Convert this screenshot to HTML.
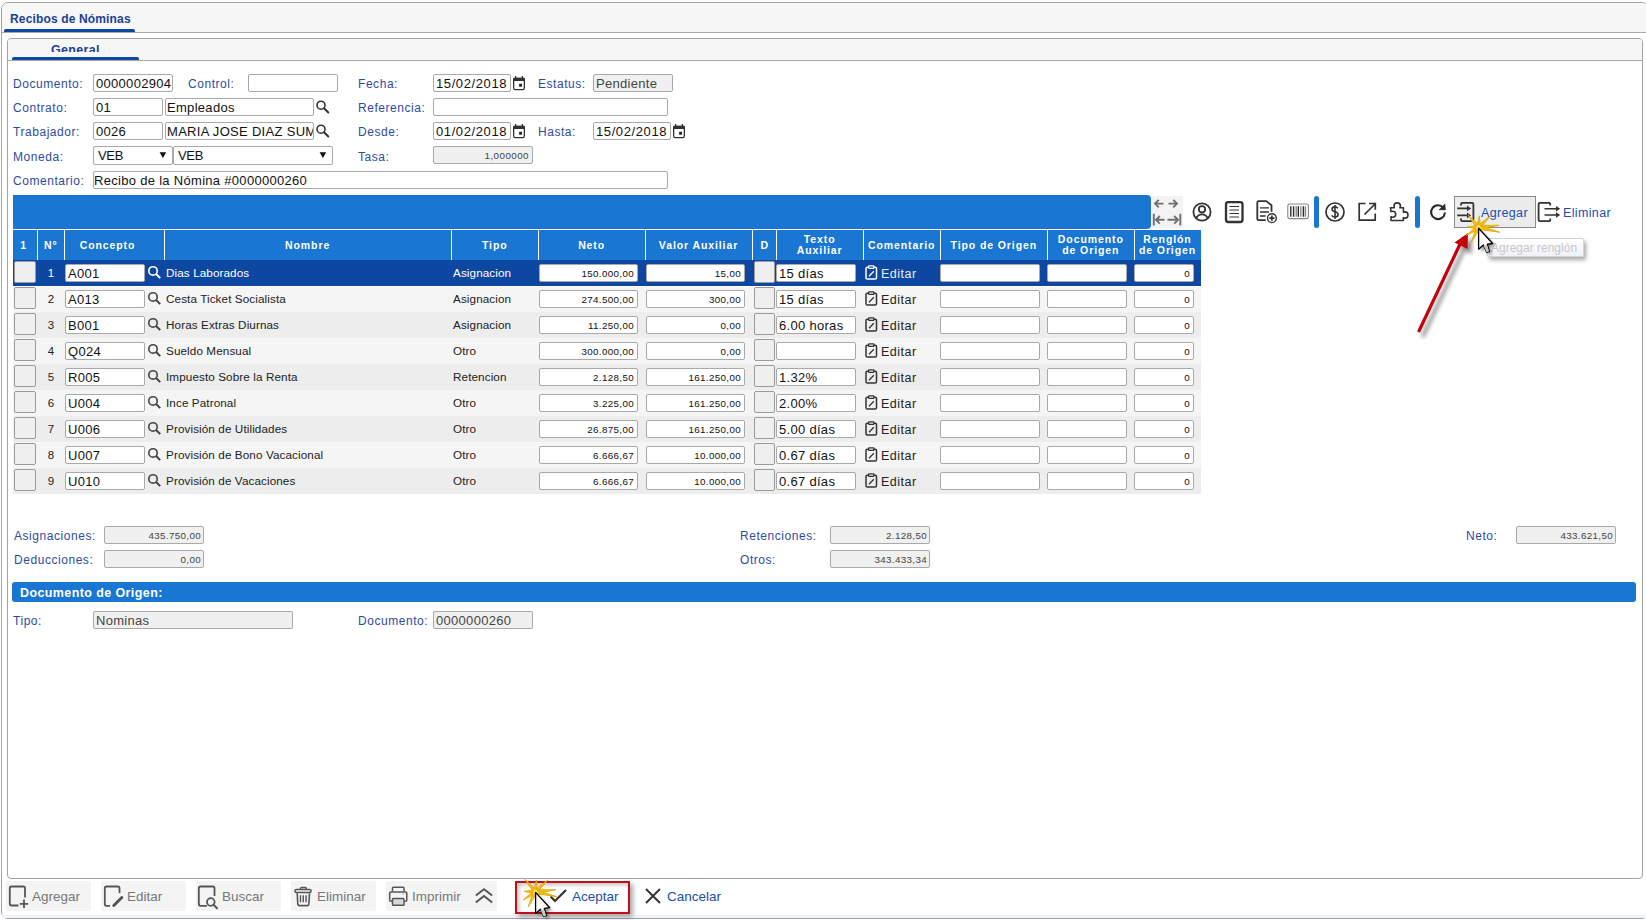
<!DOCTYPE html><html><head><meta charset="utf-8"><style>
html,body{margin:0;padding:0;background:#fff;}
body{width:1646px;height:920px;overflow:hidden;position:relative;font-family:"Liberation Sans",sans-serif;}
.t{position:absolute;white-space:nowrap;}
.hd{font-size:10.5px;font-weight:bold;color:#fff;line-height:11px;letter-spacing:0.9px;}
.lbl{position:absolute;white-space:nowrap;font-size:12px;letter-spacing:0.55px;color:#2f4ba0;line-height:16px;}
.inp{position:absolute;box-sizing:border-box;border:1px solid #a9a9a9;border-radius:2px;background:#fff;font-size:13px;color:#111;padding:0 2px;letter-spacing:0.3px;white-space:nowrap;overflow:hidden;}
.dis{position:absolute;box-sizing:border-box;border:1px solid #a9a9a9;border-radius:2px;background:#f0f0f0;font-size:13px;color:#444;padding:0 2px;letter-spacing:0.3px;white-space:nowrap;overflow:hidden;}
svg{position:absolute;overflow:visible;}
</style></head><body>
<div style="position:absolute;left:1px;top:2px;width:1648px;height:917px;box-sizing:border-box;border:1px solid #a3a3a3;border-radius:7px;background:#fff;"></div>
<div style="position:absolute;left:2px;top:3px;width:1646px;height:29px;background:#f7f7f7;border-radius:6px 6px 0 0;"></div>
<div style="position:absolute;left:2px;top:32px;width:1646px;height:1px;background:#a8a8a8;"></div>
<div style="position:absolute;left:2px;top:915px;width:1646px;height:3px;background:#f0f4f8;border-radius:0 0 6px 6px;"></div>
<div class="t" style="left:10px;top:11px;font-size:12px;font-weight:bold;color:#1c3f95;line-height:16px;letter-spacing:0.15px;">Recibos de Nóminas</div>
<div style="position:absolute;left:4px;top:29px;width:131px;height:3px;background:#0d47a1;border-radius:2px 2px 0 0;"></div>
<div style="position:absolute;left:7px;top:38px;width:1636px;height:841px;box-sizing:border-box;border:1px solid #a3a3a3;border-radius:4px;background:#fff;"></div>
<div style="position:absolute;left:8px;top:39px;width:1634px;height:21px;background:#f7f7f7;border-radius:3px 3px 0 0;"></div>
<div style="position:absolute;left:8px;top:60px;width:1634px;height:1px;background:#a8a8a8;"></div>
<div style="position:absolute;left:8px;top:39px;width:200px;height:13px;overflow:hidden;"><div class="t" style="left:43px;top:3px;font-size:12.5px;font-weight:bold;color:#1c3f95;line-height:16px;letter-spacing:0.3px;">General</div></div>
<div style="position:absolute;left:12px;top:57px;width:127px;height:3px;background:#0d47a1;border-radius:2px 2px 0 0;"></div>
<div class="lbl" style="left:13px;top:76px;">Documento:</div>
<div class="inp" style="left:93px;top:74px;width:80px;height:18px;text-align:left;line-height:17px;letter-spacing:0.3px;">0000002904</div>
<div class="lbl" style="left:188px;top:76px;">Control:</div>
<div class="inp" style="left:248px;top:74px;width:90px;height:18px;text-align:left;line-height:17px;"></div>
<div class="lbl" style="left:358px;top:76px;">Fecha:</div>
<div class="inp" style="left:433px;top:74px;width:78px;height:18px;text-align:left;line-height:17px;letter-spacing:0.6px;">15/02/2018</div>
<div class="lbl" style="left:538px;top:76px;">Estatus:</div>
<div class="dis" style="left:593px;top:74px;width:80px;height:18px;text-align:left;line-height:17px;">Pendiente</div>
<div class="lbl" style="left:13px;top:100px;">Contrato:</div>
<div class="inp" style="left:93px;top:98px;width:70px;height:18px;text-align:left;line-height:17px;">01</div>
<div class="inp" style="left:165px;top:98px;width:149px;height:18px;text-align:left;line-height:17px;padding-left:1px;">Empleados</div>
<div class="lbl" style="left:358px;top:100px;">Referencia:</div>
<div class="inp" style="left:433px;top:98px;width:235px;height:18px;text-align:left;line-height:17px;"></div>
<div class="lbl" style="left:13px;top:124px;">Trabajador:</div>
<div class="inp" style="left:93px;top:122px;width:70px;height:18px;text-align:left;line-height:17px;">0026</div>
<div class="inp" style="left:165px;top:122px;width:149px;height:18px;text-align:left;line-height:17px;padding-left:1px;">MARIA JOSE DIAZ SUMOZA</div>
<div class="lbl" style="left:358px;top:124px;">Desde:</div>
<div class="inp" style="left:433px;top:122px;width:78px;height:18px;text-align:left;line-height:17px;letter-spacing:0.6px;">01/02/2018</div>
<div class="lbl" style="left:538px;top:124px;">Hasta:</div>
<div class="inp" style="left:593px;top:122px;width:78px;height:18px;text-align:left;line-height:17px;letter-spacing:0.6px;">15/02/2018</div>
<div class="lbl" style="left:13px;top:149px;">Moneda:</div>
<div class="inp" style="left:93px;top:146px;width:80px;height:19px;text-align:left;line-height:18px;padding-left:4px;letter-spacing:-0.3px;">VEB</div>
<div class="inp" style="left:173px;top:146px;width:160px;height:19px;text-align:left;line-height:18px;padding-left:4px;letter-spacing:-0.3px;">VEB</div>
<div class="lbl" style="left:358px;top:149px;">Tasa:</div>
<div class="dis" style="left:433px;top:146px;width:100px;height:18px;text-align:right;line-height:17px;font-size:9.8px;letter-spacing:0.45px;padding-right:3px;">1,000000</div>
<div class="lbl" style="left:13px;top:173px;">Comentario:</div>
<div class="inp" style="left:93px;top:171px;width:575px;height:18px;text-align:left;line-height:17px;padding-left:0px;">Recibo de la Nómina #0000000260</div>
<div style="position:absolute;left:13px;top:195px;width:1138px;height:34px;background:#1976d2;border-radius:0 4px 4px 0;"></div>
<div style="position:absolute;left:1152px;top:196px;width:31px;height:32px;background:#f3f3f3;"></div>
<svg style="left:0;top:0" width="1646" height="920" viewBox="0 0 1646 920"><g stroke="#707070" stroke-width="1.9" fill="none" stroke-linecap="butt" stroke-linejoin="miter"><path d="M1163.5 203.6H1155M1158.8 199.8L1155 203.6L1158.8 207.4"/><path d="M1168.5 203.6H1177M1173.2 199.8L1177 203.6L1173.2 207.4"/><path d="M1153.8 213.8V225.6M1164.5 219.8H1156M1159.8 216L1156 219.8L1159.8 223.6"/><path d="M1180.3 213.8V225.6M1167.5 219.8H1178M1174.2 216L1178 219.8L1174.2 223.6"/></g><g stroke="#333" stroke-width="1.8" fill="none"><circle cx="1202" cy="212" r="8.6"/><circle cx="1202" cy="209.3" r="3.2"/><path d="M1196.2 218.3C1197.5 215.3 1199.5 214.3 1202 214.3C1204.5 214.3 1206.5 215.3 1207.8 218.3"/></g><rect x="1226" y="202.2" width="16.5" height="19.8" rx="2.2" stroke="#333" stroke-width="2.3" fill="none"/><path d="M1229.5 206.5H1239M1229.5 210H1239M1229.5 213.5H1239M1229.5 217H1239" stroke="#333" stroke-width="1.2"/><path d="M1265.7 220.2H1258.7C1257.8 220.2 1257.3 219.7 1257.3 218.8V202.5C1257.3 201.6 1257.8 201.1 1258.7 201.1H1266.3L1271.5 205.2V211.8" stroke="#333" stroke-width="1.8" fill="none" stroke-linejoin="round"/><path d="M1259.9 207.9H1269M1259.9 212H1269M1259.9 216H1265.7" stroke="#333" stroke-width="1.3"/><circle cx="1271.9" cy="218.2" r="4.4" stroke="#333" stroke-width="1.4" fill="#fff"/><path d="M1271.9 215.6V220.8M1269.3 218.2H1274.5" stroke="#333" stroke-width="1.7"/><rect x="1287.8" y="204" width="20.6" height="14.6" rx="2.2" stroke="#888" stroke-width="1.1" fill="none"/><g stroke-width="1.4"><path d="M1290.8 206.2V216.8M1293.6 206.2V216.8M1298.3 206.2V216.8M1303.4 206.2V216.8" stroke="#2a2a2a"/><path d="M1296.2 206.2V216.8M1300.8 206.2V216.8M1305.4 206.2V216.8" stroke="#8a8a8a"/></g><circle cx="1335" cy="212" r="9" stroke="#333" stroke-width="1.7" fill="none"/><path d="M1338 208.4C1337.2 207.3 1336.2 206.9 1334.9 206.9C1333.2 206.9 1332 207.8 1332 209.2C1332 210.6 1333.2 211.2 1335 211.7C1336.9 212.2 1338.1 212.9 1338.1 214.5C1338.1 216 1336.8 217 1335 217C1333.5 217 1332.4 216.4 1331.7 215.4M1335 205V219" stroke="#333" stroke-width="1.6" fill="none"/><path d="M1365.5 203.5H1359.2V220.2H1375.2V213.5" stroke="#333" stroke-width="1.7" fill="none"/><path d="M1364.5 214.5L1375 204M1369 203.5H1375.3V209.8" stroke="#333" stroke-width="1.7" fill="none"/><path d="M1390.5 207.8H1394.5C1394.2 207.2 1394 206.6 1394 206C1394 204.1 1395.5 202.9 1397.2 202.9C1398.9 202.9 1400.4 204.1 1400.4 206C1400.4 206.6 1400.2 207.2 1399.9 207.8H1403.4V212.3C1403.9 212 1404.5 211.9 1405 211.9C1406.9 211.9 1408 213.3 1408 215C1408 216.7 1406.9 218.1 1405 218.1C1404.5 218.1 1403.9 218 1403.4 217.7V220.5H1391V216.8C1391.5 217.1 1392.2 217.2 1392.7 217.2C1394.6 217.2 1395.7 215.9 1395.7 214.2C1395.7 212.5 1394.6 211.2 1392.7 211.2C1392.2 211.2 1391.5 211.3 1391 211.6Z" stroke="#333" stroke-width="1.6" fill="none" stroke-linejoin="round"/><path d="M1444.8 213.3A6.9 6.9 0 1 1 1443.3 207.8" stroke="#2a2a2a" stroke-width="2.1" fill="none" stroke-linecap="round"/><path d="M1444.9 203.9L1445.5 209.9L1439 209.8Z" fill="#2a2a2a" stroke="#2a2a2a" stroke-width="0.5" stroke-linejoin="round"/></svg>
<div style="position:absolute;left:1314px;top:196px;width:5px;height:32px;background:#1976d2;border-radius:3px;"></div>
<div style="position:absolute;left:1415px;top:196px;width:5px;height:32px;background:#1976d2;border-radius:3px;"></div>
<div style="position:absolute;left:1454px;top:196px;width:82px;height:32px;box-sizing:border-box;border:1px solid #8a8a8a;background:#ececec;"></div>
<svg style="left:0;top:0" width="1646" height="920" viewBox="0 0 1646 920"><path d="M1461 205.5V204.3C1461 203.5 1461.5 202.9 1462.3 202.9H1472.1C1472.9 202.9 1473.4 203.5 1473.4 204.3V219.8C1473.4 220.6 1472.9 221.1 1472.1 221.1H1462.3C1461.5 221.1 1461 220.6 1461 219.8V218.4" stroke="#333" stroke-width="1.8" fill="none"/><path d="M1457.2 208.4H1468M1457.2 215.4H1468" stroke="#333" stroke-width="1.6"/><path d="M1467 205.6L1471.2 208.4L1467 211.2ZM1467 212.6L1471.2 215.4L1467 218.2Z" fill="#333"/><path d="M1550.2 202.9H1539.8C1539 202.9 1538.6 203.3 1538.6 204.1V220C1538.6 220.8 1539 221.2 1539.8 221.2H1550.2" stroke="#333" stroke-width="1.8" fill="none"/><path d="M1550.2 202.9V205.6M1550.2 221.2V218.6" stroke="#333" stroke-width="1.8"/><path d="M1544.5 208.7H1557.5M1544.5 215H1557.5" stroke="#333" stroke-width="1.6"/><path d="M1556 205.9L1560.2 208.7L1556 211.5ZM1556 212.2L1560.2 215L1556 217.8Z" fill="#333"/></svg>
<div class="t" style="left:1481px;top:205px;font-size:12.5px;letter-spacing:0.35px;color:#1a4db0;line-height:16px;">Agregar</div>
<div class="t" style="left:1563px;top:205px;font-size:12.5px;letter-spacing:0.35px;color:#1a4db0;line-height:16px;">Eliminar</div>
<div style="position:absolute;left:13px;top:230px;width:1188px;height:30px;background:#1976d2;"></div>
<div style="position:absolute;left:37px;top:230px;width:1px;height:30px;background:#fff;"></div>
<div style="position:absolute;left:64px;top:230px;width:1px;height:30px;background:#fff;"></div>
<div style="position:absolute;left:164px;top:230px;width:1px;height:30px;background:#fff;"></div>
<div style="position:absolute;left:451px;top:230px;width:1px;height:30px;background:#fff;"></div>
<div style="position:absolute;left:538px;top:230px;width:1px;height:30px;background:#fff;"></div>
<div style="position:absolute;left:645px;top:230px;width:1px;height:30px;background:#fff;"></div>
<div style="position:absolute;left:752px;top:230px;width:1px;height:30px;background:#fff;"></div>
<div style="position:absolute;left:776px;top:230px;width:1px;height:30px;background:#fff;"></div>
<div style="position:absolute;left:863px;top:230px;width:1px;height:30px;background:#fff;"></div>
<div style="position:absolute;left:940px;top:230px;width:1px;height:30px;background:#fff;"></div>
<div style="position:absolute;left:1047px;top:230px;width:1px;height:30px;background:#fff;"></div>
<div style="position:absolute;left:1134px;top:230px;width:1px;height:30px;background:#fff;"></div>
<div class="t hd" style="left:-36.3px;top:240px;width:120px;text-align:center;">1</div>
<div class="t hd" style="left:-9.2px;top:240px;width:120px;text-align:center;">N°</div>
<div class="t hd" style="left:47.5px;top:240px;width:120px;text-align:center;">Concepto</div>
<div class="t hd" style="left:247.6px;top:240px;width:120px;text-align:center;">Nombre</div>
<div class="t hd" style="left:434.8px;top:240px;width:120px;text-align:center;">Tipo</div>
<div class="t hd" style="left:531.6px;top:240px;width:120px;text-align:center;">Neto</div>
<div class="t hd" style="left:638.5px;top:240px;width:120px;text-align:center;">Valor Auxiliar</div>
<div class="t hd" style="left:704.7px;top:240px;width:120px;text-align:center;">D</div>
<div class="t hd" style="left:759.7px;top:234px;width:120px;text-align:center;">Texto<br>Auxiliar</div>
<div class="t hd" style="left:841.6px;top:240px;width:120px;text-align:center;">Comentario</div>
<div class="t hd" style="left:933.8px;top:240px;width:120px;text-align:center;">Tipo de Origen</div>
<div class="t hd" style="left:1030.8px;top:234px;width:120px;text-align:center;">Documento<br>de Origen</div>
<div class="t hd" style="left:1107.5px;top:234px;width:120px;text-align:center;">Renglón<br>de Origen</div>
<div style="position:absolute;left:13px;top:260px;width:1188px;height:26px;background:#0d47a1;"></div>
<div style="position:absolute;left:14px;top:261px;width:22px;height:22px;box-sizing:border-box;border:1px solid #9a9a9a;border-radius:2px;background:#efefef;"></div>
<div class="t" style="left:38px;top:266px;width:26px;text-align:center;font-size:11.5px;color:#fff;line-height:14px;">1</div>
<div class="inp" style="left:65px;top:264px;width:80px;height:18px;text-align:left;line-height:17px;font-size:13px;line-height:18px;">A001</div>
<svg style="left:148px;top:265px" width="14" height="14" viewBox="0 0 14 14"><circle cx="5.0" cy="5.9" r="4.2" stroke="#fff" stroke-width="1.6" fill="none"/><path d="M8.1 9L12.2 13.1" stroke="#fff" stroke-width="2" stroke-linecap="butt"/></svg>
<div class="t" style="left:166px;top:266px;font-size:11.7px;letter-spacing:0.1px;color:#fff;line-height:14px;">Dias Laborados</div>
<div class="t" style="left:453px;top:266px;font-size:11.7px;letter-spacing:0.1px;color:#fff;line-height:14px;">Asignacion</div>
<div class="inp" style="left:539px;top:264px;width:99px;height:18px;text-align:right;line-height:17px;font-size:9.8px;letter-spacing:0.35px;padding-right:3px;">150.000,00</div>
<div class="inp" style="left:646px;top:264px;width:99px;height:18px;text-align:right;line-height:17px;font-size:9.8px;letter-spacing:0.35px;padding-right:3px;">15,00</div>
<div style="position:absolute;left:754px;top:261px;width:21px;height:22px;box-sizing:border-box;border:1px solid #9a9a9a;border-radius:2px;background:#efefef;"></div>
<div class="inp" style="left:776px;top:264px;width:80px;height:18px;text-align:left;line-height:17px;font-size:13px;line-height:18px;">15 días</div>
<svg style="left:865px;top:265px" width="13" height="15" viewBox="0 0 13 15"><rect x="1" y="2.3" width="10.5" height="11.7" rx="1.3" stroke="#fff" stroke-width="1.5" fill="none"/><rect x="3.6" y="0.8" width="5.3" height="2.6" rx="0.6" stroke="#fff" stroke-width="1.3" fill="#0d47a1"/><path d="M4 11.3L8.8 6.2" stroke="#fff" stroke-width="1.3"/></svg>
<div class="t" style="left:881px;top:266px;font-size:12.5px;letter-spacing:0.5px;color:#e8eefc;line-height:16px;">Editar</div>
<div class="inp" style="left:940px;top:264px;width:100px;height:18px;text-align:left;line-height:17px;"></div>
<div class="inp" style="left:1047px;top:264px;width:80px;height:18px;text-align:left;line-height:17px;"></div>
<div class="inp" style="left:1134px;top:264px;width:60px;height:18px;text-align:right;line-height:17px;font-size:9.8px;letter-spacing:0.35px;padding-right:3px;">0</div>
<div style="position:absolute;left:13px;top:286px;width:1188px;height:26px;background:#f5f5f5;"></div>
<div style="position:absolute;left:13px;top:286px;width:1188px;height:1px;background:#fcfcfc;"></div>
<div style="position:absolute;left:14px;top:287px;width:22px;height:22px;box-sizing:border-box;border:1px solid #9a9a9a;border-radius:2px;background:#efefef;"></div>
<div class="t" style="left:38px;top:292px;width:26px;text-align:center;font-size:11.5px;color:#222;line-height:14px;">2</div>
<div class="inp" style="left:65px;top:290px;width:80px;height:18px;text-align:left;line-height:17px;font-size:13px;line-height:18px;">A013</div>
<svg style="left:148px;top:291px" width="14" height="14" viewBox="0 0 14 14"><circle cx="5.0" cy="5.9" r="4.2" stroke="#444" stroke-width="1.6" fill="none"/><path d="M8.1 9L12.2 13.1" stroke="#444" stroke-width="2" stroke-linecap="butt"/></svg>
<div class="t" style="left:166px;top:292px;font-size:11.7px;letter-spacing:0.1px;color:#222;line-height:14px;">Cesta Ticket Socialista</div>
<div class="t" style="left:453px;top:292px;font-size:11.7px;letter-spacing:0.1px;color:#222;line-height:14px;">Asignacion</div>
<div class="inp" style="left:539px;top:290px;width:99px;height:18px;text-align:right;line-height:17px;font-size:9.8px;letter-spacing:0.35px;padding-right:3px;">274.500,00</div>
<div class="inp" style="left:646px;top:290px;width:99px;height:18px;text-align:right;line-height:17px;font-size:9.8px;letter-spacing:0.35px;padding-right:3px;">300,00</div>
<div style="position:absolute;left:754px;top:287px;width:21px;height:22px;box-sizing:border-box;border:1px solid #9a9a9a;border-radius:2px;background:#efefef;"></div>
<div class="inp" style="left:776px;top:290px;width:80px;height:18px;text-align:left;line-height:17px;font-size:13px;line-height:18px;">15 días</div>
<svg style="left:865px;top:291px" width="13" height="15" viewBox="0 0 13 15"><rect x="1" y="2.3" width="10.5" height="11.7" rx="1.3" stroke="#333" stroke-width="1.5" fill="none"/><rect x="3.6" y="0.8" width="5.3" height="2.6" rx="0.6" stroke="#333" stroke-width="1.3" fill="#f5f5f5"/><path d="M4 11.3L8.8 6.2" stroke="#333" stroke-width="1.3"/></svg>
<div class="t" style="left:881px;top:292px;font-size:12.5px;letter-spacing:0.5px;color:#222;line-height:16px;">Editar</div>
<div class="inp" style="left:940px;top:290px;width:100px;height:18px;text-align:left;line-height:17px;"></div>
<div class="inp" style="left:1047px;top:290px;width:80px;height:18px;text-align:left;line-height:17px;"></div>
<div class="inp" style="left:1134px;top:290px;width:60px;height:18px;text-align:right;line-height:17px;font-size:9.8px;letter-spacing:0.35px;padding-right:3px;">0</div>
<div style="position:absolute;left:13px;top:312px;width:1188px;height:26px;background:#ededed;"></div>
<div style="position:absolute;left:14px;top:313px;width:22px;height:22px;box-sizing:border-box;border:1px solid #9a9a9a;border-radius:2px;background:#efefef;"></div>
<div class="t" style="left:38px;top:318px;width:26px;text-align:center;font-size:11.5px;color:#222;line-height:14px;">3</div>
<div class="inp" style="left:65px;top:316px;width:80px;height:18px;text-align:left;line-height:17px;font-size:13px;line-height:18px;">B001</div>
<svg style="left:148px;top:317px" width="14" height="14" viewBox="0 0 14 14"><circle cx="5.0" cy="5.9" r="4.2" stroke="#444" stroke-width="1.6" fill="none"/><path d="M8.1 9L12.2 13.1" stroke="#444" stroke-width="2" stroke-linecap="butt"/></svg>
<div class="t" style="left:166px;top:318px;font-size:11.7px;letter-spacing:0.1px;color:#222;line-height:14px;">Horas Extras Diurnas</div>
<div class="t" style="left:453px;top:318px;font-size:11.7px;letter-spacing:0.1px;color:#222;line-height:14px;">Asignacion</div>
<div class="inp" style="left:539px;top:316px;width:99px;height:18px;text-align:right;line-height:17px;font-size:9.8px;letter-spacing:0.35px;padding-right:3px;">11.250,00</div>
<div class="inp" style="left:646px;top:316px;width:99px;height:18px;text-align:right;line-height:17px;font-size:9.8px;letter-spacing:0.35px;padding-right:3px;">0,00</div>
<div style="position:absolute;left:754px;top:313px;width:21px;height:22px;box-sizing:border-box;border:1px solid #9a9a9a;border-radius:2px;background:#efefef;"></div>
<div class="inp" style="left:776px;top:316px;width:80px;height:18px;text-align:left;line-height:17px;font-size:13px;line-height:18px;">6.00 horas</div>
<svg style="left:865px;top:317px" width="13" height="15" viewBox="0 0 13 15"><rect x="1" y="2.3" width="10.5" height="11.7" rx="1.3" stroke="#333" stroke-width="1.5" fill="none"/><rect x="3.6" y="0.8" width="5.3" height="2.6" rx="0.6" stroke="#333" stroke-width="1.3" fill="#ededed"/><path d="M4 11.3L8.8 6.2" stroke="#333" stroke-width="1.3"/></svg>
<div class="t" style="left:881px;top:318px;font-size:12.5px;letter-spacing:0.5px;color:#222;line-height:16px;">Editar</div>
<div class="inp" style="left:940px;top:316px;width:100px;height:18px;text-align:left;line-height:17px;"></div>
<div class="inp" style="left:1047px;top:316px;width:80px;height:18px;text-align:left;line-height:17px;"></div>
<div class="inp" style="left:1134px;top:316px;width:60px;height:18px;text-align:right;line-height:17px;font-size:9.8px;letter-spacing:0.35px;padding-right:3px;">0</div>
<div style="position:absolute;left:13px;top:338px;width:1188px;height:26px;background:#f5f5f5;"></div>
<div style="position:absolute;left:14px;top:339px;width:22px;height:22px;box-sizing:border-box;border:1px solid #9a9a9a;border-radius:2px;background:#efefef;"></div>
<div class="t" style="left:38px;top:344px;width:26px;text-align:center;font-size:11.5px;color:#222;line-height:14px;">4</div>
<div class="inp" style="left:65px;top:342px;width:80px;height:18px;text-align:left;line-height:17px;font-size:13px;line-height:18px;">Q024</div>
<svg style="left:148px;top:343px" width="14" height="14" viewBox="0 0 14 14"><circle cx="5.0" cy="5.9" r="4.2" stroke="#444" stroke-width="1.6" fill="none"/><path d="M8.1 9L12.2 13.1" stroke="#444" stroke-width="2" stroke-linecap="butt"/></svg>
<div class="t" style="left:166px;top:344px;font-size:11.7px;letter-spacing:0.1px;color:#222;line-height:14px;">Sueldo Mensual</div>
<div class="t" style="left:453px;top:344px;font-size:11.7px;letter-spacing:0.1px;color:#222;line-height:14px;">Otro</div>
<div class="inp" style="left:539px;top:342px;width:99px;height:18px;text-align:right;line-height:17px;font-size:9.8px;letter-spacing:0.35px;padding-right:3px;">300.000,00</div>
<div class="inp" style="left:646px;top:342px;width:99px;height:18px;text-align:right;line-height:17px;font-size:9.8px;letter-spacing:0.35px;padding-right:3px;">0,00</div>
<div style="position:absolute;left:754px;top:339px;width:21px;height:22px;box-sizing:border-box;border:1px solid #9a9a9a;border-radius:2px;background:#efefef;"></div>
<div class="inp" style="left:776px;top:342px;width:80px;height:18px;text-align:left;line-height:17px;font-size:13px;line-height:18px;"></div>
<svg style="left:865px;top:343px" width="13" height="15" viewBox="0 0 13 15"><rect x="1" y="2.3" width="10.5" height="11.7" rx="1.3" stroke="#333" stroke-width="1.5" fill="none"/><rect x="3.6" y="0.8" width="5.3" height="2.6" rx="0.6" stroke="#333" stroke-width="1.3" fill="#f5f5f5"/><path d="M4 11.3L8.8 6.2" stroke="#333" stroke-width="1.3"/></svg>
<div class="t" style="left:881px;top:344px;font-size:12.5px;letter-spacing:0.5px;color:#222;line-height:16px;">Editar</div>
<div class="inp" style="left:940px;top:342px;width:100px;height:18px;text-align:left;line-height:17px;"></div>
<div class="inp" style="left:1047px;top:342px;width:80px;height:18px;text-align:left;line-height:17px;"></div>
<div class="inp" style="left:1134px;top:342px;width:60px;height:18px;text-align:right;line-height:17px;font-size:9.8px;letter-spacing:0.35px;padding-right:3px;">0</div>
<div style="position:absolute;left:13px;top:364px;width:1188px;height:26px;background:#ededed;"></div>
<div style="position:absolute;left:14px;top:365px;width:22px;height:22px;box-sizing:border-box;border:1px solid #9a9a9a;border-radius:2px;background:#efefef;"></div>
<div class="t" style="left:38px;top:370px;width:26px;text-align:center;font-size:11.5px;color:#222;line-height:14px;">5</div>
<div class="inp" style="left:65px;top:368px;width:80px;height:18px;text-align:left;line-height:17px;font-size:13px;line-height:18px;">R005</div>
<svg style="left:148px;top:369px" width="14" height="14" viewBox="0 0 14 14"><circle cx="5.0" cy="5.9" r="4.2" stroke="#444" stroke-width="1.6" fill="none"/><path d="M8.1 9L12.2 13.1" stroke="#444" stroke-width="2" stroke-linecap="butt"/></svg>
<div class="t" style="left:166px;top:370px;font-size:11.7px;letter-spacing:0.1px;color:#222;line-height:14px;">Impuesto Sobre la Renta</div>
<div class="t" style="left:453px;top:370px;font-size:11.7px;letter-spacing:0.1px;color:#222;line-height:14px;">Retencion</div>
<div class="inp" style="left:539px;top:368px;width:99px;height:18px;text-align:right;line-height:17px;font-size:9.8px;letter-spacing:0.35px;padding-right:3px;">2.128,50</div>
<div class="inp" style="left:646px;top:368px;width:99px;height:18px;text-align:right;line-height:17px;font-size:9.8px;letter-spacing:0.35px;padding-right:3px;">161.250,00</div>
<div style="position:absolute;left:754px;top:365px;width:21px;height:22px;box-sizing:border-box;border:1px solid #9a9a9a;border-radius:2px;background:#efefef;"></div>
<div class="inp" style="left:776px;top:368px;width:80px;height:18px;text-align:left;line-height:17px;font-size:13px;line-height:18px;">1.32%</div>
<svg style="left:865px;top:369px" width="13" height="15" viewBox="0 0 13 15"><rect x="1" y="2.3" width="10.5" height="11.7" rx="1.3" stroke="#333" stroke-width="1.5" fill="none"/><rect x="3.6" y="0.8" width="5.3" height="2.6" rx="0.6" stroke="#333" stroke-width="1.3" fill="#ededed"/><path d="M4 11.3L8.8 6.2" stroke="#333" stroke-width="1.3"/></svg>
<div class="t" style="left:881px;top:370px;font-size:12.5px;letter-spacing:0.5px;color:#222;line-height:16px;">Editar</div>
<div class="inp" style="left:940px;top:368px;width:100px;height:18px;text-align:left;line-height:17px;"></div>
<div class="inp" style="left:1047px;top:368px;width:80px;height:18px;text-align:left;line-height:17px;"></div>
<div class="inp" style="left:1134px;top:368px;width:60px;height:18px;text-align:right;line-height:17px;font-size:9.8px;letter-spacing:0.35px;padding-right:3px;">0</div>
<div style="position:absolute;left:13px;top:390px;width:1188px;height:26px;background:#f5f5f5;"></div>
<div style="position:absolute;left:14px;top:391px;width:22px;height:22px;box-sizing:border-box;border:1px solid #9a9a9a;border-radius:2px;background:#efefef;"></div>
<div class="t" style="left:38px;top:396px;width:26px;text-align:center;font-size:11.5px;color:#222;line-height:14px;">6</div>
<div class="inp" style="left:65px;top:394px;width:80px;height:18px;text-align:left;line-height:17px;font-size:13px;line-height:18px;">U004</div>
<svg style="left:148px;top:395px" width="14" height="14" viewBox="0 0 14 14"><circle cx="5.0" cy="5.9" r="4.2" stroke="#444" stroke-width="1.6" fill="none"/><path d="M8.1 9L12.2 13.1" stroke="#444" stroke-width="2" stroke-linecap="butt"/></svg>
<div class="t" style="left:166px;top:396px;font-size:11.7px;letter-spacing:0.1px;color:#222;line-height:14px;">Ince Patronal</div>
<div class="t" style="left:453px;top:396px;font-size:11.7px;letter-spacing:0.1px;color:#222;line-height:14px;">Otro</div>
<div class="inp" style="left:539px;top:394px;width:99px;height:18px;text-align:right;line-height:17px;font-size:9.8px;letter-spacing:0.35px;padding-right:3px;">3.225,00</div>
<div class="inp" style="left:646px;top:394px;width:99px;height:18px;text-align:right;line-height:17px;font-size:9.8px;letter-spacing:0.35px;padding-right:3px;">161.250,00</div>
<div style="position:absolute;left:754px;top:391px;width:21px;height:22px;box-sizing:border-box;border:1px solid #9a9a9a;border-radius:2px;background:#efefef;"></div>
<div class="inp" style="left:776px;top:394px;width:80px;height:18px;text-align:left;line-height:17px;font-size:13px;line-height:18px;">2.00%</div>
<svg style="left:865px;top:395px" width="13" height="15" viewBox="0 0 13 15"><rect x="1" y="2.3" width="10.5" height="11.7" rx="1.3" stroke="#333" stroke-width="1.5" fill="none"/><rect x="3.6" y="0.8" width="5.3" height="2.6" rx="0.6" stroke="#333" stroke-width="1.3" fill="#f5f5f5"/><path d="M4 11.3L8.8 6.2" stroke="#333" stroke-width="1.3"/></svg>
<div class="t" style="left:881px;top:396px;font-size:12.5px;letter-spacing:0.5px;color:#222;line-height:16px;">Editar</div>
<div class="inp" style="left:940px;top:394px;width:100px;height:18px;text-align:left;line-height:17px;"></div>
<div class="inp" style="left:1047px;top:394px;width:80px;height:18px;text-align:left;line-height:17px;"></div>
<div class="inp" style="left:1134px;top:394px;width:60px;height:18px;text-align:right;line-height:17px;font-size:9.8px;letter-spacing:0.35px;padding-right:3px;">0</div>
<div style="position:absolute;left:13px;top:416px;width:1188px;height:26px;background:#ededed;"></div>
<div style="position:absolute;left:14px;top:417px;width:22px;height:22px;box-sizing:border-box;border:1px solid #9a9a9a;border-radius:2px;background:#efefef;"></div>
<div class="t" style="left:38px;top:422px;width:26px;text-align:center;font-size:11.5px;color:#222;line-height:14px;">7</div>
<div class="inp" style="left:65px;top:420px;width:80px;height:18px;text-align:left;line-height:17px;font-size:13px;line-height:18px;">U006</div>
<svg style="left:148px;top:421px" width="14" height="14" viewBox="0 0 14 14"><circle cx="5.0" cy="5.9" r="4.2" stroke="#444" stroke-width="1.6" fill="none"/><path d="M8.1 9L12.2 13.1" stroke="#444" stroke-width="2" stroke-linecap="butt"/></svg>
<div class="t" style="left:166px;top:422px;font-size:11.7px;letter-spacing:0.1px;color:#222;line-height:14px;">Provisión de Utilidades</div>
<div class="t" style="left:453px;top:422px;font-size:11.7px;letter-spacing:0.1px;color:#222;line-height:14px;">Otro</div>
<div class="inp" style="left:539px;top:420px;width:99px;height:18px;text-align:right;line-height:17px;font-size:9.8px;letter-spacing:0.35px;padding-right:3px;">26.875,00</div>
<div class="inp" style="left:646px;top:420px;width:99px;height:18px;text-align:right;line-height:17px;font-size:9.8px;letter-spacing:0.35px;padding-right:3px;">161.250,00</div>
<div style="position:absolute;left:754px;top:417px;width:21px;height:22px;box-sizing:border-box;border:1px solid #9a9a9a;border-radius:2px;background:#efefef;"></div>
<div class="inp" style="left:776px;top:420px;width:80px;height:18px;text-align:left;line-height:17px;font-size:13px;line-height:18px;">5.00 días</div>
<svg style="left:865px;top:421px" width="13" height="15" viewBox="0 0 13 15"><rect x="1" y="2.3" width="10.5" height="11.7" rx="1.3" stroke="#333" stroke-width="1.5" fill="none"/><rect x="3.6" y="0.8" width="5.3" height="2.6" rx="0.6" stroke="#333" stroke-width="1.3" fill="#ededed"/><path d="M4 11.3L8.8 6.2" stroke="#333" stroke-width="1.3"/></svg>
<div class="t" style="left:881px;top:422px;font-size:12.5px;letter-spacing:0.5px;color:#222;line-height:16px;">Editar</div>
<div class="inp" style="left:940px;top:420px;width:100px;height:18px;text-align:left;line-height:17px;"></div>
<div class="inp" style="left:1047px;top:420px;width:80px;height:18px;text-align:left;line-height:17px;"></div>
<div class="inp" style="left:1134px;top:420px;width:60px;height:18px;text-align:right;line-height:17px;font-size:9.8px;letter-spacing:0.35px;padding-right:3px;">0</div>
<div style="position:absolute;left:13px;top:442px;width:1188px;height:26px;background:#f5f5f5;"></div>
<div style="position:absolute;left:14px;top:443px;width:22px;height:22px;box-sizing:border-box;border:1px solid #9a9a9a;border-radius:2px;background:#efefef;"></div>
<div class="t" style="left:38px;top:448px;width:26px;text-align:center;font-size:11.5px;color:#222;line-height:14px;">8</div>
<div class="inp" style="left:65px;top:446px;width:80px;height:18px;text-align:left;line-height:17px;font-size:13px;line-height:18px;">U007</div>
<svg style="left:148px;top:447px" width="14" height="14" viewBox="0 0 14 14"><circle cx="5.0" cy="5.9" r="4.2" stroke="#444" stroke-width="1.6" fill="none"/><path d="M8.1 9L12.2 13.1" stroke="#444" stroke-width="2" stroke-linecap="butt"/></svg>
<div class="t" style="left:166px;top:448px;font-size:11.7px;letter-spacing:0.1px;color:#222;line-height:14px;">Provisión de Bono Vacacional</div>
<div class="t" style="left:453px;top:448px;font-size:11.7px;letter-spacing:0.1px;color:#222;line-height:14px;">Otro</div>
<div class="inp" style="left:539px;top:446px;width:99px;height:18px;text-align:right;line-height:17px;font-size:9.8px;letter-spacing:0.35px;padding-right:3px;">6.666,67</div>
<div class="inp" style="left:646px;top:446px;width:99px;height:18px;text-align:right;line-height:17px;font-size:9.8px;letter-spacing:0.35px;padding-right:3px;">10.000,00</div>
<div style="position:absolute;left:754px;top:443px;width:21px;height:22px;box-sizing:border-box;border:1px solid #9a9a9a;border-radius:2px;background:#efefef;"></div>
<div class="inp" style="left:776px;top:446px;width:80px;height:18px;text-align:left;line-height:17px;font-size:13px;line-height:18px;">0.67 días</div>
<svg style="left:865px;top:447px" width="13" height="15" viewBox="0 0 13 15"><rect x="1" y="2.3" width="10.5" height="11.7" rx="1.3" stroke="#333" stroke-width="1.5" fill="none"/><rect x="3.6" y="0.8" width="5.3" height="2.6" rx="0.6" stroke="#333" stroke-width="1.3" fill="#f5f5f5"/><path d="M4 11.3L8.8 6.2" stroke="#333" stroke-width="1.3"/></svg>
<div class="t" style="left:881px;top:448px;font-size:12.5px;letter-spacing:0.5px;color:#222;line-height:16px;">Editar</div>
<div class="inp" style="left:940px;top:446px;width:100px;height:18px;text-align:left;line-height:17px;"></div>
<div class="inp" style="left:1047px;top:446px;width:80px;height:18px;text-align:left;line-height:17px;"></div>
<div class="inp" style="left:1134px;top:446px;width:60px;height:18px;text-align:right;line-height:17px;font-size:9.8px;letter-spacing:0.35px;padding-right:3px;">0</div>
<div style="position:absolute;left:13px;top:468px;width:1188px;height:26px;background:#ededed;"></div>
<div style="position:absolute;left:14px;top:469px;width:22px;height:22px;box-sizing:border-box;border:1px solid #9a9a9a;border-radius:2px;background:#efefef;"></div>
<div class="t" style="left:38px;top:474px;width:26px;text-align:center;font-size:11.5px;color:#222;line-height:14px;">9</div>
<div class="inp" style="left:65px;top:472px;width:80px;height:18px;text-align:left;line-height:17px;font-size:13px;line-height:18px;">U010</div>
<svg style="left:148px;top:473px" width="14" height="14" viewBox="0 0 14 14"><circle cx="5.0" cy="5.9" r="4.2" stroke="#444" stroke-width="1.6" fill="none"/><path d="M8.1 9L12.2 13.1" stroke="#444" stroke-width="2" stroke-linecap="butt"/></svg>
<div class="t" style="left:166px;top:474px;font-size:11.7px;letter-spacing:0.1px;color:#222;line-height:14px;">Provisión de Vacaciones</div>
<div class="t" style="left:453px;top:474px;font-size:11.7px;letter-spacing:0.1px;color:#222;line-height:14px;">Otro</div>
<div class="inp" style="left:539px;top:472px;width:99px;height:18px;text-align:right;line-height:17px;font-size:9.8px;letter-spacing:0.35px;padding-right:3px;">6.666,67</div>
<div class="inp" style="left:646px;top:472px;width:99px;height:18px;text-align:right;line-height:17px;font-size:9.8px;letter-spacing:0.35px;padding-right:3px;">10.000,00</div>
<div style="position:absolute;left:754px;top:469px;width:21px;height:22px;box-sizing:border-box;border:1px solid #9a9a9a;border-radius:2px;background:#efefef;"></div>
<div class="inp" style="left:776px;top:472px;width:80px;height:18px;text-align:left;line-height:17px;font-size:13px;line-height:18px;">0.67 días</div>
<svg style="left:865px;top:473px" width="13" height="15" viewBox="0 0 13 15"><rect x="1" y="2.3" width="10.5" height="11.7" rx="1.3" stroke="#333" stroke-width="1.5" fill="none"/><rect x="3.6" y="0.8" width="5.3" height="2.6" rx="0.6" stroke="#333" stroke-width="1.3" fill="#ededed"/><path d="M4 11.3L8.8 6.2" stroke="#333" stroke-width="1.3"/></svg>
<div class="t" style="left:881px;top:474px;font-size:12.5px;letter-spacing:0.5px;color:#222;line-height:16px;">Editar</div>
<div class="inp" style="left:940px;top:472px;width:100px;height:18px;text-align:left;line-height:17px;"></div>
<div class="inp" style="left:1047px;top:472px;width:80px;height:18px;text-align:left;line-height:17px;"></div>
<div class="inp" style="left:1134px;top:472px;width:60px;height:18px;text-align:right;line-height:17px;font-size:9.8px;letter-spacing:0.35px;padding-right:3px;">0</div>
<div class="lbl" style="left:14px;top:528px;">Asignaciones:</div>
<div class="dis" style="left:104px;top:526px;width:100px;height:18px;text-align:right;line-height:17px;font-size:9.8px;letter-spacing:0.35px;padding-right:2px;line-height:17px;">435.750,00</div>
<div class="lbl" style="left:14px;top:552px;">Deducciones:</div>
<div class="dis" style="left:104px;top:550px;width:100px;height:18px;text-align:right;line-height:17px;font-size:9.8px;letter-spacing:0.35px;padding-right:2px;line-height:17px;">0,00</div>
<div class="lbl" style="left:740px;top:528px;">Retenciones:</div>
<div class="dis" style="left:830px;top:526px;width:100px;height:18px;text-align:right;line-height:17px;font-size:9.8px;letter-spacing:0.35px;padding-right:2px;line-height:17px;">2.128,50</div>
<div class="lbl" style="left:740px;top:552px;">Otros:</div>
<div class="dis" style="left:830px;top:550px;width:100px;height:18px;text-align:right;line-height:17px;font-size:9.8px;letter-spacing:0.35px;padding-right:2px;line-height:17px;">343.433,34</div>
<div class="lbl" style="left:1466px;top:528px;">Neto:</div>
<div class="dis" style="left:1516px;top:526px;width:100px;height:18px;text-align:right;line-height:17px;font-size:9.8px;letter-spacing:0.35px;padding-right:2px;line-height:17px;">433.621,50</div>
<div style="position:absolute;left:12px;top:582px;width:1624px;height:20px;background:#1976d2;border-radius:3px;"></div>
<div class="t" style="left:20px;top:586px;font-size:12.5px;font-weight:bold;color:#fff;line-height:15px;letter-spacing:0.4px;">Documento de Origen:</div>
<div class="lbl" style="left:13px;top:613px;">Tipo:</div>
<div class="dis" style="left:93px;top:611px;width:200px;height:18px;text-align:left;line-height:17px;">Nominas</div>
<div class="lbl" style="left:358px;top:613px;">Documento:</div>
<div class="dis" style="left:433px;top:611px;width:100px;height:18px;text-align:left;line-height:17px;">0000000260</div>
<div style="position:absolute;left:6px;top:881px;width:85px;height:30px;background:#f4f4f4;border-radius:2px;"></div>
<div style="position:absolute;left:101px;top:881px;width:85px;height:30px;background:#f4f4f4;border-radius:2px;"></div>
<div style="position:absolute;left:196px;top:881px;width:85px;height:30px;background:#f4f4f4;border-radius:2px;"></div>
<div style="position:absolute;left:291px;top:881px;width:85px;height:30px;background:#f4f4f4;border-radius:2px;"></div>
<div style="position:absolute;left:386px;top:881px;width:111px;height:30px;background:#f4f4f4;border-radius:2px;"></div>
<svg style="left:0;top:0" width="1646" height="920" viewBox="0 0 1646 920"><path d="M18.5 905.5H11.5C10.4 905.5 9.8 904.9 9.8 903.8V888.2C9.8 887.1 10.4 886.5 11.5 886.5H23.3C24.4 886.5 25 887.1 25 888.2V897.5" stroke="#555" stroke-width="1.8" fill="none"/><path d="M24 899.5V908M19.8 903.8H28.2" stroke="#555" stroke-width="1.8"/><path d="M110 905.8H106.5C105.4 905.8 104.8 905.2 104.8 904.1V888.2C104.8 887.1 105.4 886.5 106.5 886.5H117.8C118.9 886.5 119.5 887.1 119.5 888.2V893" stroke="#555" stroke-width="1.8" fill="none"/><path d="M113.8 905.5L121.8 897.5" stroke="#555" stroke-width="3" stroke-linecap="round"/><path d="M207 905.8H200.5C199.4 905.8 198.8 905.2 198.8 904.1V888.2C198.8 887.1 199.4 886.5 200.5 886.5H212.8C213.9 886.5 214.5 887.1 214.5 888.2V896" stroke="#555" stroke-width="1.8" fill="none"/><circle cx="210.8" cy="902" r="3.8" stroke="#555" stroke-width="1.8" fill="none"/><path d="M213.5 904.8L217 908.3" stroke="#555" stroke-width="2" stroke-linecap="round"/><rect x="294.9" y="889.6" width="16.2" height="3" rx="1.5" stroke="#555" stroke-width="1.5" fill="none"/><path d="M300.6 889.4V888.6C300.6 887.9 301 887.5 301.7 887.5H305.2C305.9 887.5 306.3 887.9 306.3 888.6V889.4" stroke="#555" stroke-width="1.5" fill="none"/><path d="M297.2 893.3L297.8 904.2C297.9 905.1 298.4 905.6 299.3 905.6H307.4C308.3 905.6 308.8 905.1 308.9 904.2L309.5 893.3" stroke="#555" stroke-width="1.6" fill="none"/><path d="M300.5 895.3V902.2M303.3 895.3V902.2M306.1 895.3V902.2" stroke="#555" stroke-width="1.4"/><path d="M392.5 891.3V888C392.5 887.5 392.8 887.2 393.3 887.2H403.2C403.7 887.2 404 887.5 404 888V891.3" stroke="#555" stroke-width="1.5" fill="none"/><path d="M392 901.3H391C390.2 901.3 389.7 900.8 389.7 900V893.3C389.7 892.5 390.2 892 391 892H405.5C406.3 892 406.8 892.5 406.8 893.3V900C406.8 900.8 406.3 901.3 405.5 901.3H404.5" stroke="#555" stroke-width="1.5" fill="none"/><rect x="392.5" y="898.4" width="11.5" height="6.9" rx="0.8" stroke="#555" stroke-width="1.5" fill="#d8d8d8"/><circle cx="403.2" cy="894" r="0.6" fill="#555"/><path d="M475.8 895.6L484 889.2L492.2 895.6M475.8 902.4L484 896L492.2 902.4" stroke="#555" stroke-width="1.9" fill="none"/><path d="M550.5 896.5L555 901L566 890" stroke="#333" stroke-width="2.2" fill="none"/><path d="M646 889L660 903M660 889L646 903" stroke="#333" stroke-width="1.9" fill="none"/></svg>
<div class="t" style="left:32px;top:889px;font-size:13.5px;color:#777;line-height:16px;">Agregar</div>
<div class="t" style="left:127px;top:889px;font-size:13.5px;color:#777;line-height:16px;">Editar</div>
<div class="t" style="left:222px;top:889px;font-size:13.5px;color:#777;line-height:16px;">Buscar</div>
<div class="t" style="left:317px;top:889px;font-size:13.5px;color:#777;line-height:16px;">Eliminar</div>
<div class="t" style="left:412px;top:889px;font-size:13.5px;color:#777;line-height:16px;">Imprimir</div>
<div class="t" style="left:572px;top:889px;font-size:13.5px;color:#1a4db0;line-height:16px;">Aceptar</div>
<div class="t" style="left:667px;top:889px;font-size:13.5px;color:#1a4db0;line-height:16px;">Cancelar</div>
<svg style="left:0;top:0" width="1646" height="920" viewBox="0 0 1646 920"><rect x="513.65" y="78.45" width="10.7" height="11.1" rx="1.6" stroke="#333" stroke-width="1.3" fill="none"/><rect x="513" y="77.8" width="12" height="3.2" rx="1" fill="#333"/><path d="M515.6 76V78.5M522.4 76V78.5" stroke="#333" stroke-width="1.3"/><rect x="519.1" y="83.8" width="2.9" height="2.9" fill="#222"/><rect x="513.65" y="126.45" width="10.7" height="11.1" rx="1.6" stroke="#333" stroke-width="1.3" fill="none"/><rect x="513" y="125.8" width="12" height="3.2" rx="1" fill="#333"/><path d="M515.6 124V126.5M522.4 124V126.5" stroke="#333" stroke-width="1.3"/><rect x="519.1" y="131.8" width="2.9" height="2.9" fill="#222"/><rect x="673.65" y="126.45" width="10.7" height="11.1" rx="1.6" stroke="#333" stroke-width="1.3" fill="none"/><rect x="673" y="125.8" width="12" height="3.2" rx="1" fill="#333"/><path d="M675.6 124V126.5M682.4 124V126.5" stroke="#333" stroke-width="1.3"/><rect x="679.1" y="131.8" width="2.9" height="2.9" fill="#222"/><circle cx="321" cy="105.2" r="4" stroke="#333" stroke-width="1.6" fill="none"/><path d="M324 108.2L328.3 112.5" stroke="#333" stroke-width="2" stroke-linecap="round"/><circle cx="321" cy="129.2" r="4" stroke="#333" stroke-width="1.6" fill="none"/><path d="M324 132.2L328.3 136.5" stroke="#333" stroke-width="2" stroke-linecap="round"/><path d="M159.6 152.2H166.2L162.9 158Z" fill="#111"/><path d="M319.6 152.2H326.2L322.9 158Z" fill="#111"/></svg>
<div style="position:absolute;left:1487px;top:238px;width:97px;height:19px;box-sizing:border-box;border:1px solid #d4d4d4;border-radius:2px;background:linear-gradient(#fff,#f0f0f8);box-shadow:2px 3px 4px rgba(0,0,0,0.35);"></div>
<div class="t" style="left:1491px;top:241px;font-size:12px;color:#c8c8c8;line-height:14px;">Agregar renglón</div>
<div style="position:absolute;left:515px;top:881px;width:115px;height:33px;box-sizing:border-box;border:2px solid #c0101a;box-shadow:3px 3px 5px rgba(0,0,0,0.35), inset 2px 2px 4px rgba(0,0,0,0.25);"></div>
<svg style="left:0;top:0" width="1646" height="920" viewBox="0 0 1646 920"><defs><filter id="sh" x="-50%" y="-50%" width="200%" height="200%"><feGaussianBlur stdDeviation="2"/></filter></defs><g transform="translate(4,5)" opacity="0.45" filter="url(#sh)"><path d="M1418.5 332L1461 242" stroke="#000" stroke-width="3.5"/><path d="M1468 233L1454.5 242.5L1467.5 249Z" fill="#000"/></g><path d="M1418.5 332L1461 242" stroke="#c4000b" stroke-width="3.2"/><path d="M1468 233L1454.5 242.5L1467.5 249Z" fill="#c4000b"/></svg>
<svg style="left:0;top:0" width="1646" height="920" viewBox="0 0 1646 920"><defs><filter id="cs" x="-50%" y="-50%" width="200%" height="200%"><feGaussianBlur stdDeviation="1.8"/></filter></defs><path d="M1479.86 226.08L1468.00 214.90L1476.94 228.52Z" fill="#f3c21a" stroke="#e8a600" stroke-width="0.9" stroke-linejoin="round"/><path d="M1480.29 227.46L1479.40 215.80L1476.51 227.14Z" fill="#f3c21a" stroke="#e8a600" stroke-width="0.9" stroke-linejoin="round"/><path d="M1479.70 228.69L1490.70 215.80L1477.10 225.91Z" fill="#f3c21a" stroke="#e8a600" stroke-width="0.9" stroke-linejoin="round"/><path d="M1478.58 229.19L1498.90 225.30L1478.22 225.41Z" fill="#f3c21a" stroke="#e8a600" stroke-width="0.9" stroke-linejoin="round"/><path d="M1477.97 229.15L1499.80 232.30L1478.83 225.45Z" fill="#f3c21a" stroke="#e8a600" stroke-width="0.9" stroke-linejoin="round"/><path d="M1478.45 225.40L1467.00 227.00L1478.35 229.20Z" fill="#f3c21a" stroke="#e8a600" stroke-width="0.9" stroke-linejoin="round"/><path d="M1477.34 225.72L1466.20 235.50L1479.46 228.88Z" fill="#f3c21a" stroke="#e8a600" stroke-width="0.9" stroke-linejoin="round"/><path d="M1476.68 226.48L1471.20 242.40L1480.12 228.12Z" fill="#f3c21a" stroke="#e8a600" stroke-width="0.9" stroke-linejoin="round"/><circle cx="1478.4" cy="227.3" r="2.2" fill="#f5e36a"/><g transform="translate(1481.1,230.7)" opacity="0.45" filter="url(#cs)"><path d="M0 0V21L4.8 16.8L8 24.1L10.8 23.1L8.7 16L14.1 15.3Z" fill="#000"/></g><g transform="translate(1478.6,228.2)"><path d="M0 0V21L4.8 16.8L8 24.1L10.8 23.1L8.7 16L14.1 15.3Z" fill="#fff" stroke="#000" stroke-width="1.3" stroke-linejoin="round"/><path d="M5 17.5L8 24L10.5 23L8.3 16.5Z" fill="#c8c8c8"/></g><path d="M536.86 890.48L525.00 879.30L533.94 892.92Z" fill="#f3c21a" stroke="#e8a600" stroke-width="0.9" stroke-linejoin="round"/><path d="M537.29 891.86L536.40 880.20L533.51 891.54Z" fill="#f3c21a" stroke="#e8a600" stroke-width="0.9" stroke-linejoin="round"/><path d="M536.70 893.09L547.70 880.20L534.10 890.31Z" fill="#f3c21a" stroke="#e8a600" stroke-width="0.9" stroke-linejoin="round"/><path d="M535.58 893.59L555.90 889.70L535.22 889.81Z" fill="#f3c21a" stroke="#e8a600" stroke-width="0.9" stroke-linejoin="round"/><path d="M534.97 893.55L556.80 896.70L535.83 889.85Z" fill="#f3c21a" stroke="#e8a600" stroke-width="0.9" stroke-linejoin="round"/><path d="M535.45 889.80L524.00 891.40L535.35 893.60Z" fill="#f3c21a" stroke="#e8a600" stroke-width="0.9" stroke-linejoin="round"/><path d="M534.34 890.12L523.20 899.90L536.46 893.28Z" fill="#f3c21a" stroke="#e8a600" stroke-width="0.9" stroke-linejoin="round"/><path d="M533.68 890.88L528.20 906.80L537.12 892.52Z" fill="#f3c21a" stroke="#e8a600" stroke-width="0.9" stroke-linejoin="round"/><circle cx="535.4" cy="891.7" r="2.2" fill="#f5e36a"/><g transform="translate(538.1,894.9)" opacity="0.45" filter="url(#cs)"><path d="M0 0V21L4.8 16.8L8 24.1L10.8 23.1L8.7 16L14.1 15.3Z" fill="#000"/></g><g transform="translate(535.6,892.4)"><path d="M0 0V21L4.8 16.8L8 24.1L10.8 23.1L8.7 16L14.1 15.3Z" fill="#fff" stroke="#000" stroke-width="1.3" stroke-linejoin="round"/><path d="M5 17.5L8 24L10.5 23L8.3 16.5Z" fill="#c8c8c8"/></g></svg>
</body></html>
